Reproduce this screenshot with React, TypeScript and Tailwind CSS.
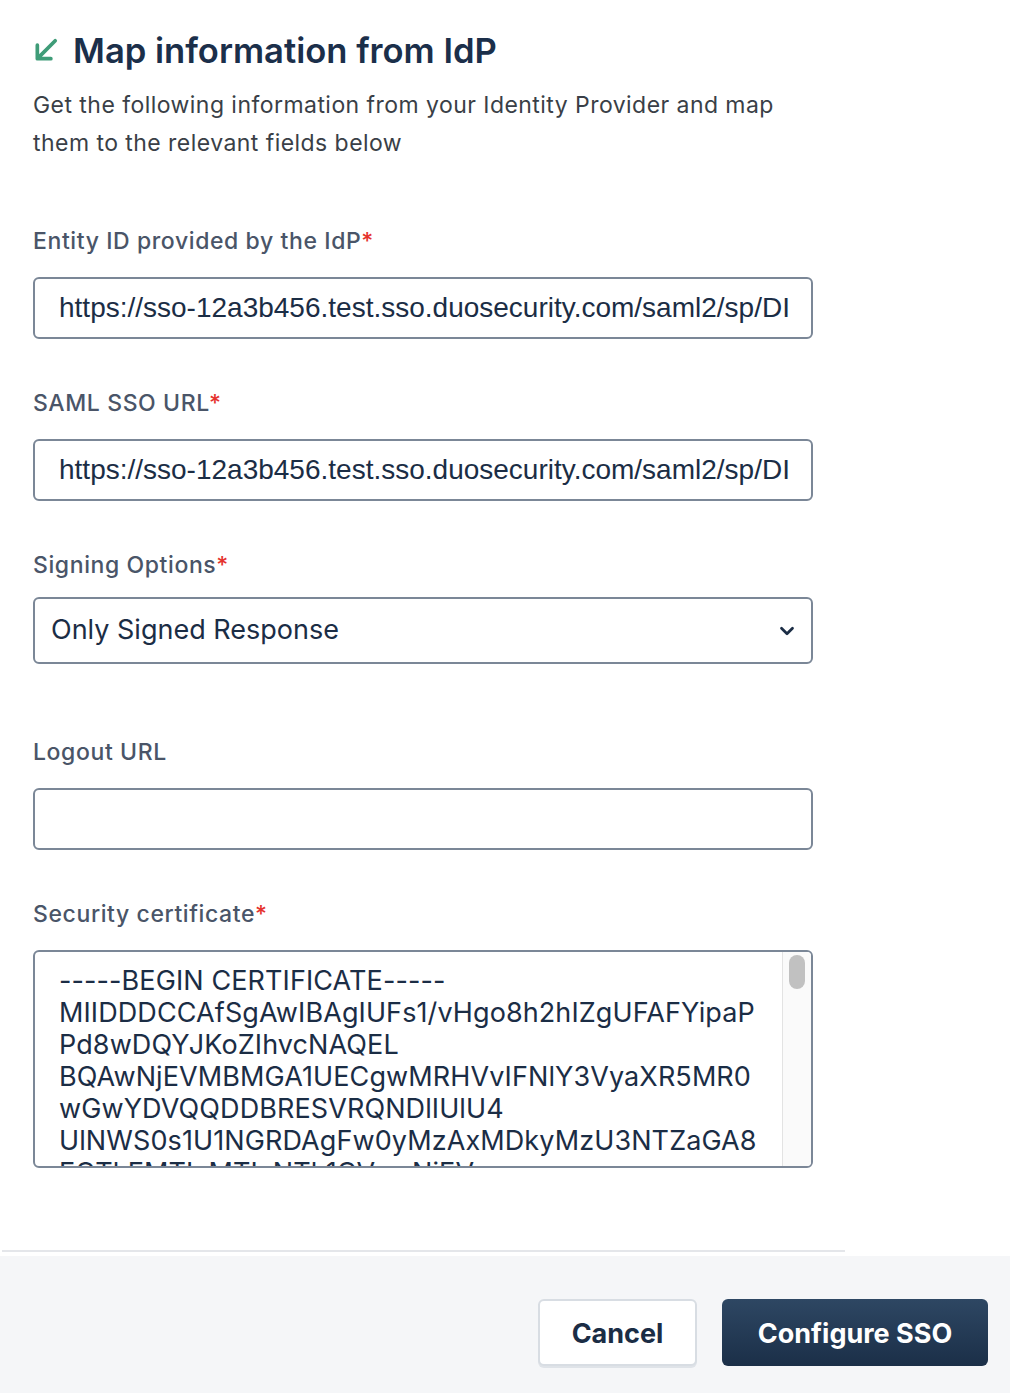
import { ChevronDown } from "lucide-react";

const INTER = "font-['Inter','Noto_Sans',sans-serif]";
const ARIAL = "font-['Liberation_Sans',Arial,sans-serif]";

const CERT_LINES = [
  "-----BEGIN CERTIFICATE-----",
  "MIIDDDCCAfSgAwIBAgIUFs1/vHgo8h2hIZgUFAFYipaP",
  "Pd8wDQYJKoZIhvcNAQEL",
  "BQAwNjEVMBMGA1UECgwMRHVvIFNlY3VyaXR5MR0",
  "wGwYDVQQDDBRESVRQNDlIUlU4",
  "UlNWS0s1U1NGRDAgFw0yMzAxMDkyMzU3NTZaGA8",
  "EOTkEMTIzMTIzNTk1OVowNjEV",
  "MBMGA1UECgwMRHVvIFNlY3VyaXR5",
];

const SSO_URL = "https://sso-12a3b456.test.sso.duosecurity.com/saml2/sp/DI";

function Label({ text, required }: { text: string; required?: boolean }) {
  return (
    <p className="text-[23px] font-medium leading-[32px] tracking-[0.6px] text-[#4a5568]">
      {text}
      {required && <span className="text-[#e5322d]">*</span>}
    </p>
  );
}

function TextInput({ value }: { value: string }) {
  return (
    <input
      readOnly
      value={value}
      className={`${ARIAL} block h-[62px] w-full rounded-[6px] border-2 border-[#7b8797] bg-white pl-[24px] pr-[18px] text-[28px] text-[#1b2d45] outline-none`}
    />
  );
}

function ArrowIcon() {
  return (
    <svg width="26" height="26" viewBox="0 0 24 24" fill="none" className="shrink-0">
      <path d="M20.5 3.5L5 19M4 7.5V20h12.5" stroke="#3f9c78" strokeWidth="3.4" strokeLinecap="round" strokeLinejoin="round" />
    </svg>
  );
}

export default function App() {
  return (
    <div className={`${INTER} min-h-[1394px] w-[1010px] bg-white`}>
      <div className="px-[33px] pt-[30px]">
        <div className="flex h-[40px] items-center gap-[14px]">
          <ArrowIcon />
          <h1 className="text-[34.6px] font-semibold leading-[40px] text-[#1b2f4a]">Map information from IdP</h1>
        </div>
        <p className="mt-[16px] w-[780px] text-[23px] leading-[38px] tracking-[0.45px] text-[#3a3f47]">
          Get the following information from your Identity Provider and map them to the relevant fields below
        </p>

        <div className="w-[780px]">
          <div className="mt-[63px]">
            <Label text="Entity ID provided by the IdP" required />
            <div className="mt-[20px]">
              <TextInput value={SSO_URL} />
            </div>
          </div>

          <div className="mt-[48px]">
            <Label text="SAML SSO URL" required />
            <div className="mt-[20px]">
              <TextInput value={SSO_URL} />
            </div>
          </div>

          <div className="mt-[48px]">
            <Label text="Signing Options" required />
            <div className="mt-[16px] flex h-[67px] items-center justify-between rounded-[6px] border-2 border-[#7b8797] bg-white pl-[16px] pr-[13px]">
              <span className="text-[27px] text-[#1b2d45]">Only Signed Response</span>
              <ChevronDown size={22} strokeWidth={3} className="text-[#1b2d45]" />
            </div>
          </div>

          <div className="mt-[72px]">
            <Label text="Logout URL" />
            <div className="mt-[20px]">
              <TextInput value="" />
            </div>
          </div>

          <div className="mt-[48px]">
            <Label text="Security certificate" required />
            <div className="mt-[20px] flex h-[218px] overflow-hidden rounded-[6px] border-2 border-[#7b8797] bg-white">
              <div className="flex-1 overflow-hidden pl-[24px] pt-[13px]">
                {CERT_LINES.map((line) => (
                  <p key={line} className="whitespace-nowrap text-[27px] leading-[32px] tracking-[0.1px] text-[#1b2d45]">
                    {line}
                  </p>
                ))}
              </div>
              <div className="flex w-[29px] justify-center border-l border-[#e3e3e3] bg-[#fafafa] pt-[3px]">
                <div className="h-[34px] w-[16px] rounded-full bg-[#c1c1c1]" />
              </div>
            </div>
          </div>
        </div>
      </div>

      <div className="ml-[2px] mt-[82px] h-[2px] w-[843px] bg-[#e4e6ea]" />

      <footer className="mt-[4px] flex h-[137px] justify-end gap-[25px] bg-[#f5f6f8] pr-[22px] pt-[43px]">
        <button
          type="button"
          className="h-[67px] w-[159px] rounded-[6px] border-2 border-[#d8dde3] bg-white pt-[4px] text-[27px] font-bold text-[#1b2d45] shadow-[0_2px_0_#dfe3e8]"
        >
          Cancel
        </button>
        <button
          type="button"
          className="h-[67px] w-[266px] rounded-[6px] bg-gradient-to-b from-[#2e4763] to-[#1b2f48] pt-[4px] text-[27px] font-bold text-white"
        >
          Configure SSO
        </button>
      </footer>
    </div>
  );
}
